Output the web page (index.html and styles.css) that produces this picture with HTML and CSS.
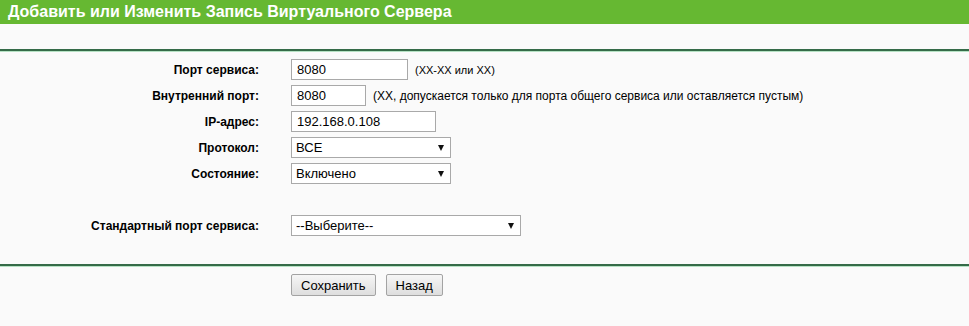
FILE: index.html
```html
<!DOCTYPE html>
<html lang="ru">
<head>
  <meta charset="UTF-8" />
  <title>Виртуальные серверы</title>
  <link rel="stylesheet" href="styles.css">
</head>
<body>
  <div class="title">Добавить или Изменить Запись Виртуального Сервера</div>
  <div class="rule rule-top"></div>

  <div class="form">
    <div class="row">
      <label class="lbl">Порт сервиса:</label>
      <div class="field">
        <input class="txt w-port" type="text" value="8080">
        <span class="hint small">(XX-XX или XX)</span>
      </div>
    </div>
    <div class="row">
      <label class="lbl">Внутренний порт:</label>
      <div class="field">
        <input class="txt w-inner" type="text" value="8080">
        <span class="hint">(XX, допускается только для порта общего сервиса или оставляется пустым)</span>
      </div>
    </div>
    <div class="row">
      <label class="lbl">IP-адрес:</label>
      <div class="field">
        <input class="txt w-ip" type="text" value="192.168.0.108">
      </div>
    </div>
    <div class="row">
      <label class="lbl">Протокол:</label>
      <div class="field">
        <span class="sel w-mid"><select><option>ВСЕ</option><option>TCP</option><option>UDP</option></select></span>
      </div>
    </div>
    <div class="row">
      <label class="lbl">Состояние:</label>
      <div class="field">
        <span class="sel w-mid"><select><option>Включено</option><option>Отключено</option></select></span>
      </div>
    </div>
    <div class="row"></div>
    <div class="row">
      <label class="lbl">Стандартный порт сервиса:</label>
      <div class="field">
        <span class="sel w-wide"><select><option>--Выберите--</option></select></span>
      </div>
    </div>
  </div>

  <div class="rule rule-bottom"></div>

  <div class="actions">
    <button class="btn">Сохранить</button>
    <button class="btn">Назад</button>
  </div>
</body>
</html>
```

FILE: styles.css
```css
body {
  margin: 0;
  background: #fafafa;
  font-family: "Liberation Sans", Arial, sans-serif;
  font-size: 12px;
  color: #000;
}
.title {
  height: 24px;
  line-height: 24px;
  background: #66b832;
  color: #fff;
  font-size: 16px;
  font-weight: bold;
  padding-left: 8px;
  margin-bottom: 25px;
}
.rule {
  height: 0;
  border-top: 2px solid #356b48;
  border-bottom: 1px solid #b6e2c4;
}
.form {
  padding-top: 7px;
  display: flex;
  flex-direction: column;
  gap: 5px;
}
.row {
  display: grid;
  grid-template-columns: 259px 1fr;
  column-gap: 32px;
  height: 21px;
  align-items: center;
}
.lbl {
  text-align: right;
  font-weight: bold;
}
.field {
  display: flex;
  align-items: center;
  gap: 7px;
}
.txt {
  box-sizing: border-box;
  height: 21px;
  margin: 0;
  padding: 0 5px;
  border: 1px solid #a9a9a9;
  background: #fff;
  font-family: "Liberation Sans", Arial, sans-serif;
  font-size: 13px;
  color: #000;
  outline: none;
}
.w-port { width: 117px; }
.w-inner { width: 75px; }
.w-ip { width: 145px; }
.hint { font-size: 12px; }
.hint.small { font-size: 11px; }
.sel {
  position: relative;
  display: inline-block;
  height: 21px;
}
.sel select {
  appearance: none;
  -webkit-appearance: none;
  box-sizing: border-box;
  width: 100%;
  height: 21px;
  margin: 0;
  padding: 0 4px;
  border: 1px solid #a9a9a9;
  border-radius: 0;
  background: #fff;
  font-family: "Liberation Sans", Arial, sans-serif;
  font-size: 13px;
  color: #000;
}
.sel::after {
  content: "";
  position: absolute;
  right: 7px;
  top: 8px;
  border-left: 3.5px solid transparent;
  border-right: 3.5px solid transparent;
  border-top: 6px solid #111;
  pointer-events: none;
}
.w-mid { width: 160px; }
.w-wide { width: 230px; }
.rule-bottom {
  margin-top: 28px;
}
.actions {
  padding: 7px 0 0 291px;
  display: flex;
  gap: 10px;
}
.btn {
  height: 22px;
  padding: 0 9px;
  border: 1px solid #a3a3a3;
  border-radius: 2px;
  background: linear-gradient(#f6f6f6, #dedede);
  font-family: "Liberation Sans", Arial, sans-serif;
  font-size: 13px;
  color: #000;
}
```
